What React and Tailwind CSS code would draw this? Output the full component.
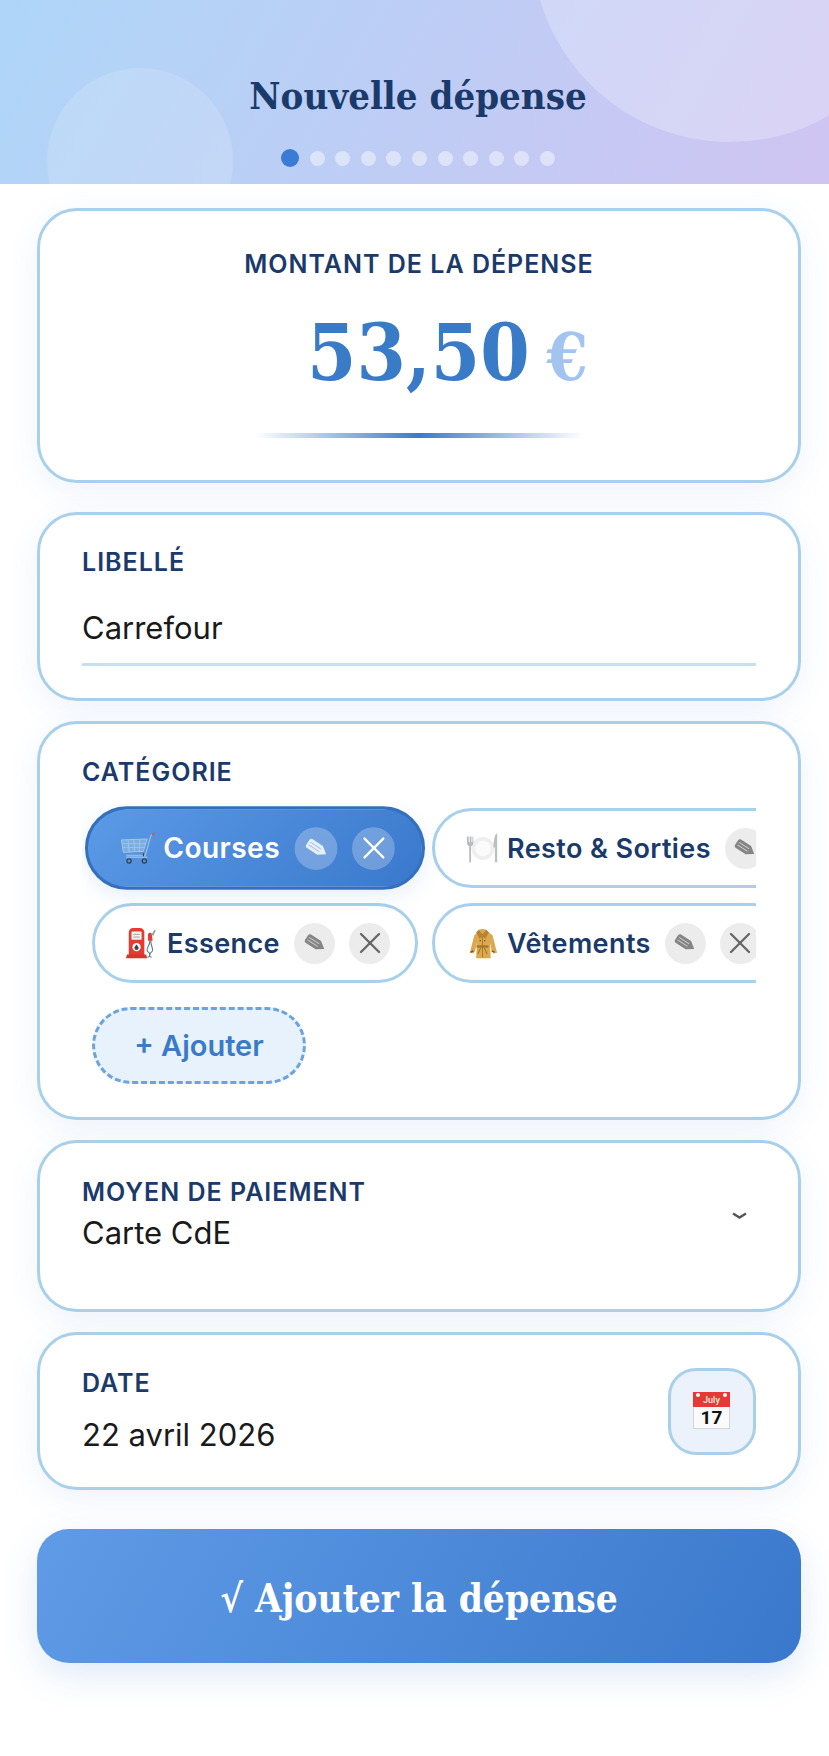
import React from "react";
import { X } from "lucide-react";

const SANS = "font-['Inter','Noto_Sans',sans-serif]";
const SERIF = "font-['DejaVu_Serif','Liberation_Serif',serif] [font-stretch:condensed]";

function CartIcon() {
  return (
    <svg viewBox="0 0 36 36" className="w-[33px] h-[33px] shrink-0">
      <path d="M35 3l-3 1-6 21H6" fill="none" stroke="#a9c4e2" strokeWidth="1.100" />
      <path d="M1 9l27-1-4 13-21 1z" fill="#9fc2e6" fillOpacity="0.55" stroke="#a9cfe6" strokeWidth="0.900" />
      <path d="M2 13h25M2 17h23M8 9l1 13M14 9l1 12M20 9l0 12" stroke="#a9cfe6" strokeWidth="0.700" fill="none" />
      <path d="M33 4l3-2" stroke="#d9534f" strokeWidth="1.800" />
      <circle cx="9" cy="31" r="2.200" fill="none" stroke="#33414f" strokeWidth="1.300" />
      <circle cx="25" cy="31" r="2.200" fill="none" stroke="#33414f" strokeWidth="1.300" />
      <path d="M6 27h22" stroke="#a9c4e2" strokeWidth="1.200" />
      <path d="M24 23v3" stroke="#33414f" strokeWidth="1.200" />
    </svg>
  );
}

function PlateIcon() {
  return (
    <svg viewBox="0 0 36 36" className="w-[33px] h-[33px] shrink-0">
      <circle cx="18.500" cy="18" r="12.500" fill="#efefef" />
      <circle cx="18.500" cy="18" r="8.500" fill="#fbfbfb" />
      <path d="M1 5v7c0 2 1 3 2.500 3.500V33h2V15.500C7 15 8 14 8 12V5H7v6H6V5H4v6H3V5z" fill="#b9bcbe" />
      <path d="M33 2c-2 2-3 8-3 15h1.500v16H34V2z" fill="#bcbfc1" />
    </svg>
  );
}

function PumpIcon() {
  return (
    <svg viewBox="0 0 36 36" className="w-[33px] h-[33px] shrink-0">
      <path d="M3 6c0-3 2-5 5-5h7c3 0 5 2 5 5v25H3z" fill="#e23d32" />
      <path d="M1 30h21l1 4H0z" fill="#d8352b" />
      <rect x="6" y="5" width="11" height="9" rx="1" fill="#f1f1f1" />
      <path d="M8 8h7M8 11h7" stroke="#9e9e9e" strokeWidth="1" />
      <circle cx="11.500" cy="22" r="4.500" fill="#fafafa" />
      <path d="M11.500 19c1.700 2.200 2.300 3 2.300 3.900a2.300 2.300 0 0 1-4.600 0c0-.9.600-1.700 2.300-3.900z" fill="#37474f" />
      <path d="M26 15c0 5-3 7-3 10 0 2 2 2.500 3 4 1 2-1 4-3 4M27 15c0 5 2 7 2 10 0 2-2 2.500-3 4-1 2 0 4 2 4" fill="none" stroke="#607d8b" strokeWidth="1.200" />
      <path d="M24 8c1-2 3-2 4-1l1 8h-5z" fill="#e23d32" />
      <path d="M28 8l3-5 1.500 1-3 6z" fill="#90a4ae" />
    </svg>
  );
}

function CoatIcon() {
  return (
    <svg viewBox="0 0 36 36" className="w-[33px] h-[33px] shrink-0">
      <path d="M14 3c2-1 6-1 8 0l3 3 4 3 4 16 1 3-4 1-2-3-2-9 1 17H11l1-17-2 9-2 3-4-1 1-3 4-16 4-3z" fill="#dca94f" />
      <path d="M14 3l4 5 4-5 3 3-4 7-3-3-3 3-4-7z" fill="#b98430" />
      <path d="M18 10v23" stroke="#a5752a" strokeWidth="1" />
      <rect x="11.500" y="20" width="13" height="2.500" fill="#a5752a" />
      <path d="M16 22.500l-3 7M20 22.500l3 7" stroke="#a5752a" strokeWidth="1.200" />
      <path d="M8 26l-3 1.500M28 26l3 1.500" stroke="#6d4c1d" strokeWidth="1.400" />
      <circle cx="15.500" cy="15" r="0.800" fill="#6d4c1d" />
      <circle cx="20.500" cy="15" r="0.800" fill="#6d4c1d" />
    </svg>
  );
}

function CalendarIcon() {
  return (
    <svg viewBox="0 0 37 38" className="w-[37px] h-[38px] -translate-x-[1px] -translate-y-[1px]">
      <rect x="0.500" y="14" width="36" height="23.500" fill="#fafafa" stroke="#d5d5d5" strokeWidth="1" />
      <rect x="0" y="1" width="37" height="15" fill="#e53935" />
      <circle cx="5" cy="4" r="2" fill="#fff" />
      <circle cx="32" cy="4" r="2" fill="#fff" />
      <text x="18.500" y="12" textAnchor="middle" fontSize="9" fontWeight="600" fill="#fde0dc" fontFamily="Roboto, sans-serif">July</text>
      <text x="18.500" y="33" textAnchor="middle" fontSize="19" fontWeight="700" fill="#111" fontFamily="Roboto, sans-serif">17</text>
    </svg>
  );
}

function PencilIcon({ active }) {
  const body = active ? "#e6effb" : "#858585";
  const strip = active ? "#a9c4ea" : "#cccccc";
  return (
    <svg viewBox="0 0 24 18" className="w-[24px] h-[18px]">
      <g transform="rotate(33 12 9)">
        <path d="M2 6c0-1 1-2 2-2h12l7 5-7 5H4c-1 0-2-1-2-2z" fill={body} />
        <path d="M4 7.500h12M4 10.500h12" stroke={strip} strokeWidth="1" />
      </g>
    </svg>
  );
}

function RoundAction({ active, children }) {
  return (
    <span className={`w-[41px] h-[41px] rounded-full shrink-0 flex items-center justify-center ${active ? "bg-white/25 text-white" : "bg-[#ececec] text-[#666666]"}`}>
      {children}
    </span>
  );
}

function Chip({ icon, label, active, width }) {
  return (
    <div
      className={`h-[80px] rounded-full border-[3px] flex items-center shrink-0 pl-[31px] ${width} ${
        active
          ? "scale-[1.043] bg-linear-[135deg,#5b9ae6,#3a78cc] border-[#3570bd] text-white shadow-[0_6px_20px_rgba(58,123,213,0.12)]"
          : "bg-white border-[#a8d0eb] text-[#1a3a6b]"
      }`}
    >
      <span className="flex items-center gap-[8px]">
        {icon}
        <span className="text-[27px] leading-none font-semibold tracking-[0.4px] whitespace-nowrap">{label}</span>
      </span>
      <span className="ml-[14px] flex gap-[14px]">
        <RoundAction active={active}>
          <PencilIcon active={active} />
        </RoundAction>
        <RoundAction active={active}>
          <X size={36} strokeWidth={1.5} />
        </RoundAction>
      </span>
    </div>
  );
}

function Card({ className = "", children }) {
  return (
    <section className={`bg-white border-[3px] border-[#a8d0eb] rounded-[40px] shadow-[0_8px_32px_rgba(58,123,213,0.09)] px-[42px] ${className}`}>
      {children}
    </section>
  );
}

function FieldLabel({ children }) {
  return <div className="text-[25px] leading-[30px] font-semibold tracking-[1px] text-[#1a3a6b]">{children}</div>;
}

export default function App() {
  const steps = [0, 1, 2, 3, 4, 5, 6, 7, 8, 9];
  return (
    <div className={`${SANS} w-[829px] h-[1756px] overflow-hidden bg-white`}>
      <header className="relative h-[184px] overflow-hidden bg-linear-[120deg,#aed6f8,#cfc4f2] pl-[7px] flex flex-col items-center">
        <div className="absolute w-[396px] h-[396px] rounded-full bg-white/25 left-[532px] -top-[254px]" />
        <div className="absolute w-[186px] h-[186px] rounded-full bg-white/15 left-[47px] top-[68px]" />
        <h1 className={`relative ${SERIF} mt-[70px] text-[38px] leading-[52px] font-bold text-[#1a3a6b]`}>Nouvelle dépense</h1>
        <div className="relative mt-[27px] flex items-center gap-[10.600px]">
          <span className="w-[18px] h-[18px] rounded-full bg-[#3a7bd5]" />
          {steps.map((s) => (
            <span key={s} className="w-[15px] h-[15px] rounded-full bg-white/45" />
          ))}
        </div>
      </header>

      <main className="pl-[37px] pr-[28px] pt-[24px] flex flex-col">
        <Card className="pt-[37px] pb-[42px] flex flex-col items-center">
          <div className="text-[25px] leading-[32px] font-semibold tracking-[1px] text-[#1a3a6b]">MONTANT DE LA DÉPENSE</div>
          <div className={`${SERIF} mt-[23px] pl-[57px] h-[100px] flex items-baseline gap-[17px] font-bold`}>
            <span className="text-[79px] leading-[100px] text-[#3a7bc8]">53,50</span>
            <span className="text-[66px] leading-[100px] text-[#a3c4ee]">€</span>
          </div>
          <div className="mt-[30px] w-[328px] h-[5px] rounded-full bg-linear-[90deg,transparent,#3a7bc8,transparent]" />
        </Card>

        <Card className="mt-[29px] pt-[32px] pb-[32px]">
          <FieldLabel>LIBELLÉ</FieldLabel>
          <div className="mt-[31px] pb-[15px] border-b-[3px] border-[#c7e0ef] text-[31px] leading-[40px] text-[#1a1a1a]">Carrefour</div>
        </Card>

        <Card className="mt-[20px] pt-[33px] pb-[33px]">
          <FieldLabel>CATÉGORIE</FieldLabel>
          <div className="mt-[16px] pt-[5px] overflow-hidden pl-[10px] flex flex-col">
            <div className="flex gap-[14px] items-center">
              <Chip active icon={<CartIcon />} label="Courses" width="w-[326px]" />
              <Chip icon={<PlateIcon />} label="Resto & Sorties" width="w-[420px]" />
            </div>
            <div className="mt-[15px] flex gap-[14px] items-center">
              <Chip icon={<PumpIcon />} label="Essence" width="w-[326px]" />
              <Chip icon={<CoatIcon />} label="Vêtements" width="w-[360px]" />
            </div>
            <div className="mt-[24px] w-[214px] h-[77px] rounded-full border-[3px] border-dashed border-[#6ba3dc] bg-[#e8f2fc] flex items-center justify-center text-[29px] font-semibold text-[#3a7bc8]">
              + Ajouter
            </div>
          </div>
        </Card>

        <Card className="mt-[20px] pt-[34px] pb-[56px] flex justify-between">
          <div>
            <FieldLabel>MOYEN DE PAIEMENT</FieldLabel>
            <div className="mt-[6px] text-[31px] leading-[40px] text-[#1a1a1a]">Carte CdE</div>
          </div>
          <svg viewBox="0 0 15 8" className="w-[15px] h-[8px] mt-[35px] mr-[9px]">
            <path d="M1 1.500L7.500 5.500 14 1.500" fill="none" stroke="#555555" strokeWidth="2.400" />
          </svg>
        </Card>

        <Card className="mt-[20px] h-[158px] flex items-center justify-between">
          <div className="mb-[5px]">
            <FieldLabel>DATE</FieldLabel>
            <div className="mt-[22px] text-[31px] leading-[30px] text-[#1a1a1a]">22 avril 2026</div>
          </div>
          <div className="w-[88px] h-[87px] rounded-[28px] bg-[#ebf2fc] border-[3px] border-[#a8d0eb] flex items-center justify-center">
            <CalendarIcon />
          </div>
        </Card>

        <button className={`${SERIF} mt-[39px] h-[134px] pt-[6px] rounded-[32px] bg-linear-[120deg,#5f9be6,#3a78cc] text-[38.500px] font-bold text-white shadow-[0_12px_36px_rgba(58,123,213,0.16)]`}>
          √ Ajouter la dépense
        </button>
      </main>
    </div>
  );
}
